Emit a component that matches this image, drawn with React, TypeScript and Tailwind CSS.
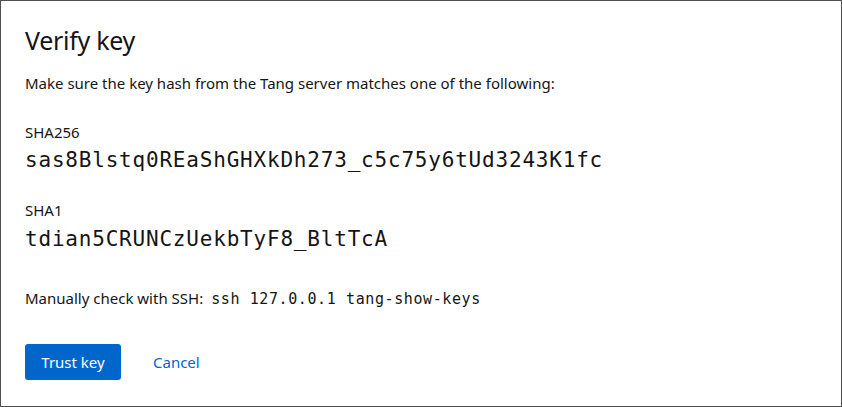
export default function App() {
  return (
    <div className="w-[842px] h-[407px] border border-[#4f4f4f] bg-white text-[#151515] font-['Noto_Sans',sans-serif]">
      <div className="px-6 pt-[23px]">
        <h1 className="text-[25px] leading-[32px] tracking-[-0.3px]">Verify key</h1>
        <p className="mt-[15px] text-[15px] leading-[24px]">
          Make sure the key hash from the Tang server matches one of the following:
        </p>

        <div className="mt-[26px]">
          <div className="text-[15px] leading-[22px]">SHA256</div>
          <div className="mt-[4px] font-['DejaVu_Sans_Mono',monospace] text-[21px] leading-[26px] tracking-[0.8px]">
            sas8Blstq0REaShGHXkDh273_c5c75y6tUd3243K1fc
          </div>
        </div>

        <div className="mt-[26px]">
          <div className="text-[15px] leading-[22px]">SHA1</div>
          <div className="mt-[5px] font-['DejaVu_Sans_Mono',monospace] text-[21px] leading-[26px] tracking-[0.8px]">
            tdian5CRUNCzUekbTyF8_BltTcA
          </div>
        </div>

        <p className="mt-[34px] text-[15px] leading-[24px] flex items-baseline gap-[8px]">
          <span>Manually check with SSH:</span>
          <code className="font-['DejaVu_Sans_Mono',monospace] text-[15px] tracking-[0.6px]">
            ssh 127.0.0.1 tang-show-keys
          </code>
        </p>

        <div className="mt-[33px] flex items-center gap-2">
          <button className="h-[36px] w-[96px] rounded-[3px] bg-[#0066cc] text-white text-[15px]">
            Trust key
          </button>
          <button className="h-[36px] px-6 text-[#0066cc] text-[15px]">Cancel</button>
        </div>
      </div>
    </div>
  )
}
